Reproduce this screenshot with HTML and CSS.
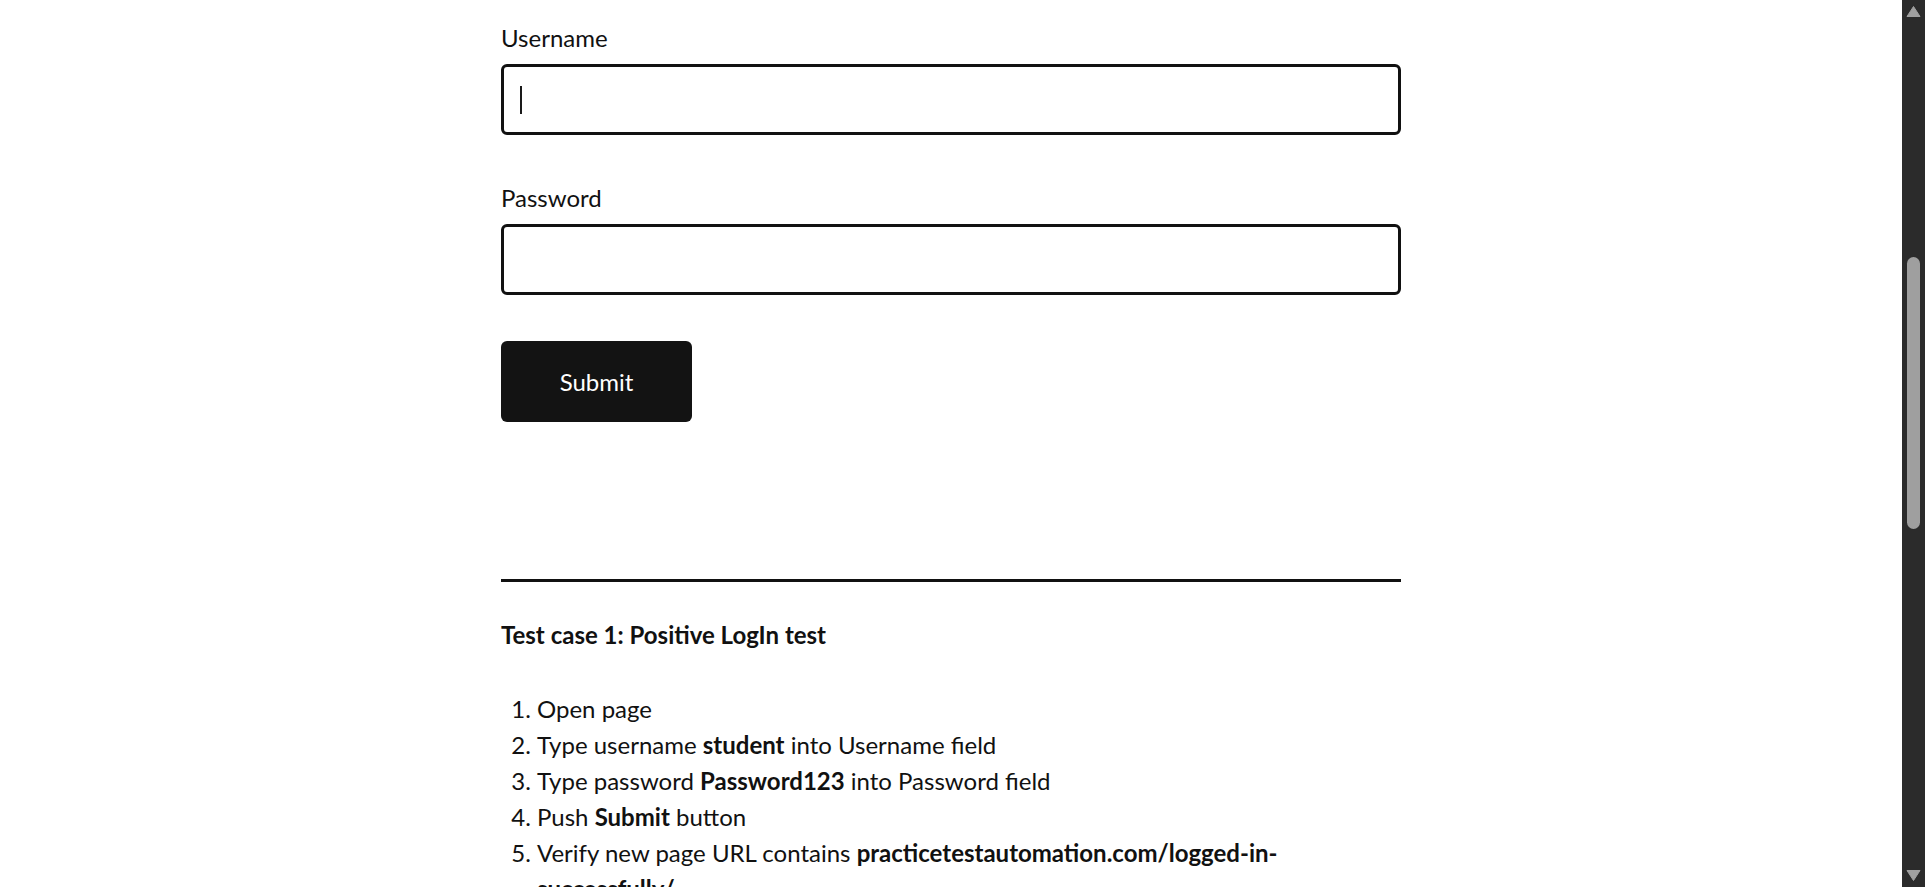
FILE: index.html
```html
<!DOCTYPE html>
<html lang="en">
<head>
<meta charset="utf-8">
<title>Test Login | Practice Test Automation</title>
<link rel="stylesheet" href="styles.css">
</head>
<body>
<main class="page">
  <form class="login-form" onsubmit="return false;">
    <div class="field">
      <label class="field-label" for="username">Username</label>
      <div class="input-wrap">
        <input class="field-input" type="text" id="username" name="username">
        <span class="caret" aria-hidden="true"></span>
      </div>
    </div>
    <div class="field field-password">
      <label class="field-label" for="password">Password</label>
      <div class="input-wrap">
        <input class="field-input" type="password" id="password" name="password">
      </div>
    </div>
    <button class="submit-btn" type="submit">Submit</button>
  </form>

  <hr class="divider">

  <section class="test-case">
    <h5 class="case-title">Test case 1: Positive LogIn test</h5>
    <ol class="steps">
      <li>Open page</li>
      <li>Type username <strong>student</strong> into Username field</li>
      <li>Type password <strong>Password123</strong> into Password field</li>
      <li>Push <strong>Submit</strong> button</li>
      <li>Verify new page URL contains <strong>practicetestautomation.com/logged-in-successfully/</strong></li>
      <li>Verify new page contains expected text ('Congratulations' or 'successfully logged in')</li>
      <li>Verify button <strong>Log out</strong> is displayed on the new page</li>
    </ol>
  </section>

  <section class="test-case">
    <h5 class="case-title">Test case 2: Negative username test</h5>
    <ol class="steps">
      <li>Open page</li>
      <li>Type username <strong>incorrectUser</strong> into Username field</li>
      <li>Type password <strong>Password123</strong> into Password field</li>
      <li>Push <strong>Submit</strong> button</li>
      <li>Verify error message is displayed</li>
      <li>Verify error message text is <strong>Your username is invalid!</strong></li>
    </ol>
  </section>
</main>

<div class="scrollbar" aria-hidden="true">
  <div class="scroll-arrow">
    <svg width="23" height="23" viewBox="0 0 23 23"><polygon points="5,16.5 18,16.5 11.5,6.5" fill="#a0a0a0" stroke="#a0a0a0" stroke-width="1" stroke-linejoin="round"/></svg>
  </div>
  <div class="scroll-track">
    <div class="scroll-thumb"></div>
  </div>
  <div class="scroll-arrow">
    <svg width="23" height="23" viewBox="0 0 23 23"><polygon points="5,6.5 18,6.5 11.5,16.5" fill="#a0a0a0" stroke="#a0a0a0" stroke-width="1" stroke-linejoin="round"/></svg>
  </div>
</div>
</body>
</html>
```

FILE: styles.css
```css
html {
  background: #ffffff;
  scrollbar-width: none;
}

html::-webkit-scrollbar {
  display: none;
}

body {
  margin: 0;
  padding-right: 23px;
  font-family: Lato, "Liberation Sans", Arial, sans-serif;
  color: #111111;
}

.page {
  width: 900px;
  margin: 0 auto;
  padding: 23px 0 400px;
}

.login-form {
  display: flex;
  flex-direction: column;
  align-items: flex-start;
}

.field {
  display: flex;
  flex-direction: column;
  width: 100%;
}

.field-password {
  margin-top: 48px;
}

.field-label {
  font-size: 24px;
  line-height: 29px;
  margin-bottom: 12px;
}

.input-wrap {
  position: relative;
  width: 100%;
}

.field-input {
  display: block;
  box-sizing: border-box;
  width: 100%;
  height: 71px;
  border: 3px solid #111111;
  border-radius: 6px;
  padding: 0 16px;
  font-family: Lato, "Liberation Sans", Arial, sans-serif;
  font-size: 24px;
  color: #111111;
  background: #ffffff;
  outline: none;
}

.caret {
  position: absolute;
  left: 19px;
  top: 22px;
  width: 2px;
  height: 28px;
  background: #1a1a1a;
}

.submit-btn {
  margin-top: 46px;
  width: 191px;
  height: 81px;
  border: none;
  border-radius: 6px;
  background: #131313;
  color: #ffffff;
  font-family: Lato, "Liberation Sans", Arial, sans-serif;
  font-size: 24px;
  cursor: pointer;
}

.divider {
  margin: 157px 0 0;
  border: none;
  height: 3px;
  background: #111111;
}

.test-case {
  margin-top: 38px;
}

.case-title {
  margin: 0;
  font-size: 24px;
  line-height: 29px;
  font-weight: 700;
}

.steps {
  margin: 42px 0 0;
  padding-left: 36px;
  font-size: 24px;
  line-height: 36px;
}

.steps strong {
  font-weight: 700;
}

.scrollbar {
  position: fixed;
  top: 0;
  right: 0;
  width: 23px;
  height: 100vh;
  background: #2b2b2b;
  display: flex;
  flex-direction: column;
}

.scroll-arrow {
  height: 23px;
  flex: none;
}

.scroll-arrow svg {
  display: block;
}

.scroll-track {
  flex: 1;
  display: flex;
  flex-direction: column;
  align-items: center;
}

.scroll-thumb {
  margin-top: 234px;
  margin-left: -1px;
  width: 13px;
  height: 272px;
  border-radius: 7px;
  background: #9f9f9f;
}
```
